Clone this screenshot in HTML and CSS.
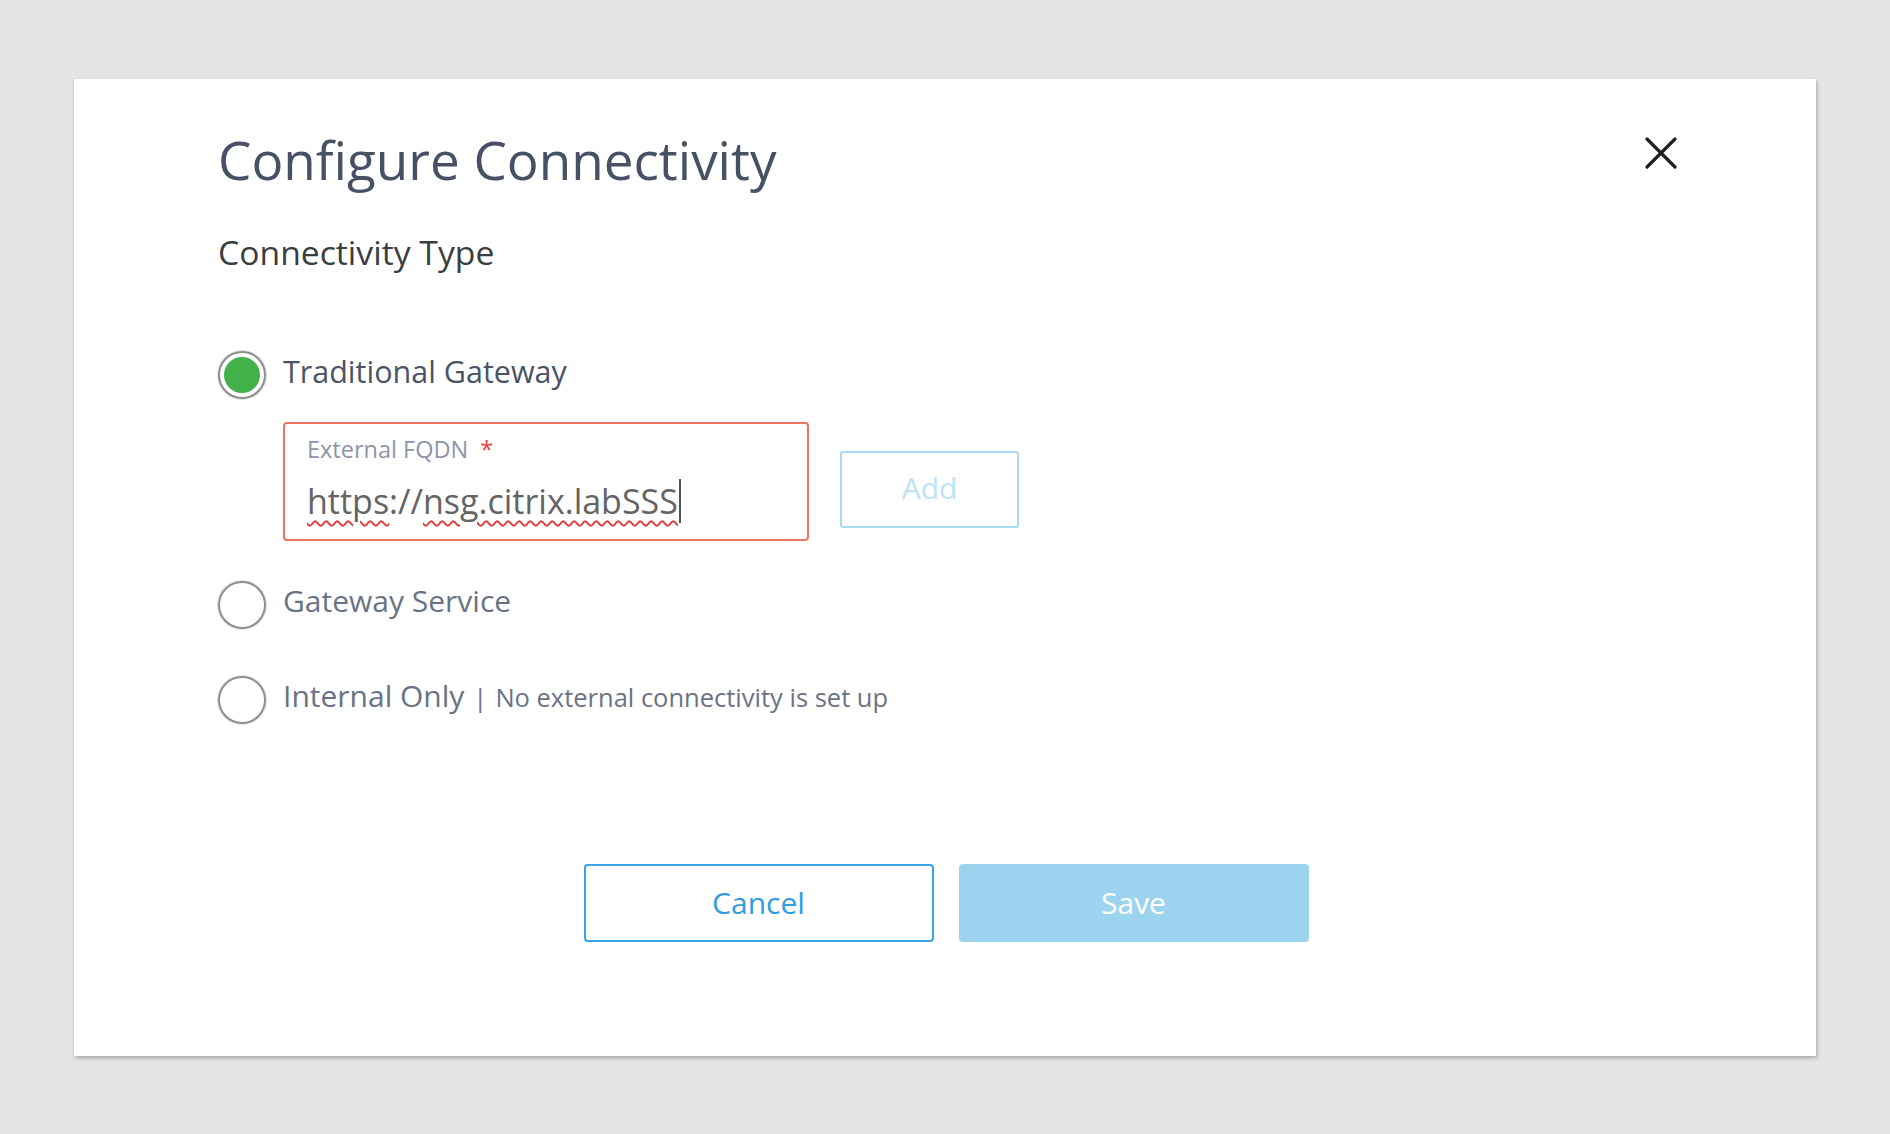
FILE: index.html
```html
<!DOCTYPE html>
<html lang="en">
<head>
<meta charset="utf-8">
<title>Configure Connectivity</title>
<link rel="stylesheet" href="styles.css">
</head>
<body>
<div class="dialog">
  <div class="header">
    <h1 class="title">Configure Connectivity</h1>
    <button class="close" aria-label="Close">
      <svg width="32" height="32" viewBox="0 0 32 32"><path d="M2 2 L30 30 M30 2 L2 30" stroke="#1f1f1f" stroke-width="3.2" stroke-linecap="round" fill="none"/></svg>
    </button>
  </div>
  <div class="section-label">Connectivity Type</div>

  <div class="options">
    <div class="option">
      <span class="radio checked"><span class="dot"></span></span>
      <span class="opt-label strong">Traditional Gateway</span>
    </div>
    <div class="field-row">
      <div class="field">
        <div class="field-label">External FQDN <span class="req">*</span></div>
        <div class="field-value"><span class="misspelled">https</span>://<span class="misspelled">nsg.citrix.labSSS</span><span class="caret"></span></div>
      </div>
      <button class="btn-add">Add</button>
    </div>
    <div class="option opt-2">
      <span class="radio"></span>
      <span class="opt-label">Gateway Service</span>
    </div>
    <div class="option opt-3">
      <span class="radio"></span>
      <span class="opt-label">Internal Only</span>
      <span class="opt-note"><span class="sep">|</span>No external connectivity is set up</span>
    </div>
  </div>

  <div class="actions">
    <button class="btn btn-cancel">Cancel</button>
    <button class="btn btn-save">Save</button>
  </div>
</div>
</body>
</html>
```

FILE: styles.css
```css
html, body {
  margin: 0;
  padding: 0;
}
body {
  background: #e5e5e5;
  font-family: "Open Sans", "Noto Sans", sans-serif;
  width: 1890px;
  height: 1134px;
  overflow: hidden;
}
.dialog {
  box-sizing: border-box;
  margin: 79px 0 0 74px;
  width: 1742px;
  height: 977px;
  background: #ffffff;
  box-shadow: 1px 2px 4px rgba(0, 0, 0, 0.28);
  padding: 49px 139px 0 144px;
}
.header {
  display: flex;
  justify-content: space-between;
  align-items: flex-start;
}
.title {
  margin: 0;
  font-size: 53px;
  line-height: 64px;
  font-weight: 400;
  color: #465166;
}
.close {
  margin-top: 9px;
  padding: 0;
  border: 0;
  background: none;
  width: 32px;
  height: 32px;
  display: block;
}
.close svg { display: block; }
.section-label {
  margin-top: 40px;
  font-size: 33.7px;
  line-height: 40px;
  color: #3a3d42;
}
.options {
  margin-top: 79px;
  display: flex;
  flex-direction: column;
}
.option {
  display: flex;
  align-items: flex-start;
  height: 48px;
}
.radio {
  box-sizing: border-box;
  width: 48px;
  height: 48px;
  border-radius: 50%;
  border: 2px solid #8e8e8e;
  box-shadow: 0 0 0 1px rgba(160,160,160,0.35);
  display: flex;
  align-items: center;
  justify-content: center;
  flex: none;
}
.radio .dot {
  width: 36px;
  height: 36px;
  border-radius: 50%;
  background: #43b14a;
}
.opt-label {
  margin-left: 17px;
  font-size: 30px;
  line-height: 40px;
  color: #687386;
}
.opt-label.strong {
  font-size: 30.5px;
  color: #4a5467;
}
.opt-note {
  font-size: 25.5px;
  line-height: 40px;
  color: #6a7385;
  margin-top: 1px;
}
.opt-note .sep {
  margin: 0 8px 0 9px;
}
.field-row {
  display: flex;
  align-items: flex-start;
  margin: 23px 0 0 65px;
}
.field {
  box-sizing: border-box;
  width: 526px;
  height: 119px;
  border: 2px solid #e8765e;
  border-radius: 4px;
  padding: 11px 20px 0 22px;
}
.field-label {
  font-size: 23.5px;
  line-height: 28px;
  color: #8c96a8;
}
.field-label .req {
  color: #e8433a;
  margin-left: 6px;
}
.field-value {
  margin-top: 16px;
  font-size: 34px;
  line-height: 40px;
  color: #646464;
  display: flex;
  align-items: center;
  white-space: nowrap;
}
.misspelled {
  text-decoration: underline wavy #e53935;
  text-decoration-thickness: 1.5px;
  text-underline-offset: 6px;
}
.caret {
  display: inline-block;
  width: 0;
  height: 44px;
  border-left: 2px solid #555;
  margin-left: 1px;
}
.btn-add {
  box-sizing: border-box;
  margin: 29px 0 0 31px;
  width: 179px;
  height: 77px;
  border: 2px solid #a9dbf5;
  border-radius: 3px;
  background: #ffffff;
  color: #bde3f8;
  font-family: "Open Sans", "Noto Sans", sans-serif;
  font-size: 30px;
  padding: 0 0 4px;
}
.opt-2 {
  margin-top: 40px;
}
.opt-3 {
  margin-top: 47px;
}
.actions {
  display: flex;
  justify-content: center;
  gap: 25px;
  margin: 140px 0 0 -3px;
}
.btn {
  box-sizing: border-box;
  width: 350px;
  height: 78px;
  border-radius: 4px;
  font-family: "Open Sans", "Noto Sans", sans-serif;
  font-size: 30px;
  padding: 0 0 2px;
}
.btn-cancel {
  background: #ffffff;
  border: 2px solid #3aa4e4;
  color: #2e9ee0;
}
.btn-save {
  background: #9cd4f0;
  border: 0;
  color: #ffffff;
}
```
